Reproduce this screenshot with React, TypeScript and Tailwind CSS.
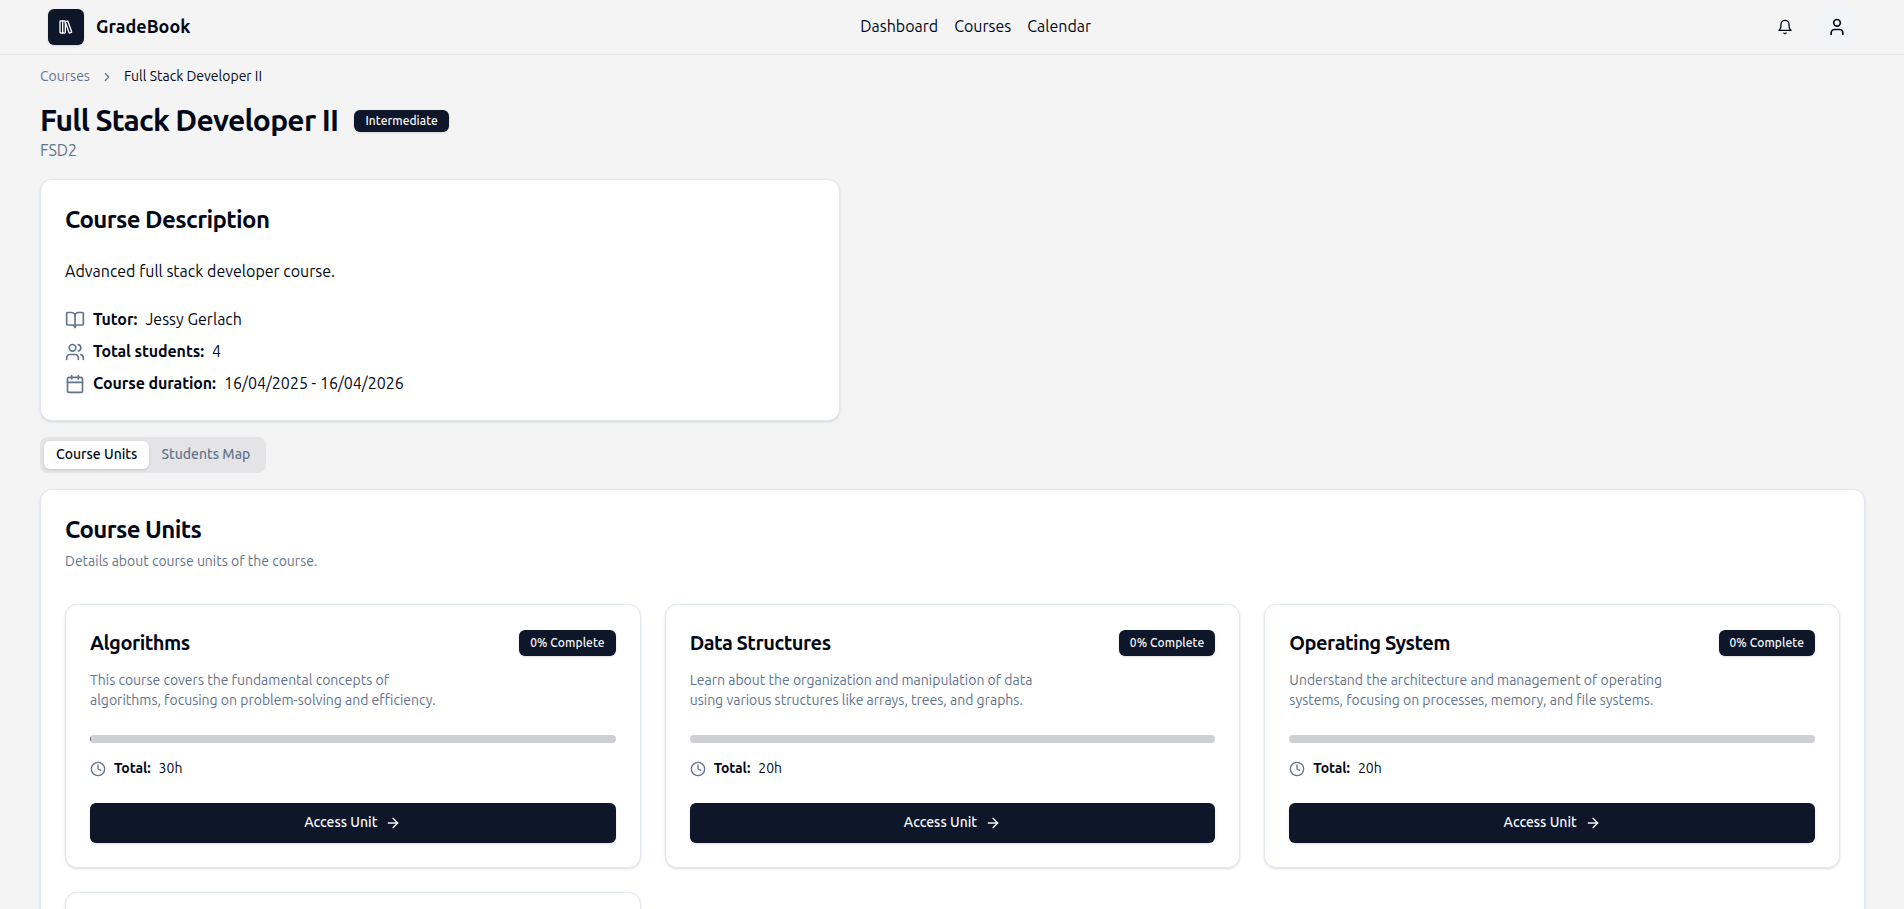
import type { ReactNode } from "react";
import { ArrowRight, BookOpen, Calendar, ChevronRight, Clock, LibraryBig, User, Users } from "lucide-react";

type Unit = {
  name: string;
  lines: string[];
  hours: string;
  started?: boolean;
};

const units: Unit[] = [
  {
    name: "Algorithms",
    lines: ["This course covers the fundamental concepts of", "algorithms, focusing on problem-solving and efficiency."],
    hours: "30h",
    started: true,
  },
  {
    name: "Data Structures",
    lines: ["Learn about the organization and manipulation of data", "using various structures like arrays, trees, and graphs."],
    hours: "20h",
  },
  {
    name: "Operating System",
    lines: ["Understand the architecture and management of operating", "systems, focusing on processes, memory, and file systems."],
    hours: "20h",
  },
];

function Bell() {
  return (
    <svg width="16" height="16" viewBox="0 0 24 24" fill="none" stroke="currentColor" strokeWidth="2" strokeLinecap="round" strokeLinejoin="round">
      <path d="M6 8a6 6 0 0 1 12 0c0 7 3 9 3 9H3s3-2 3-9" />
      <path d="M10.3 21a1.94 1.94 0 0 0 3.4 0" />
    </svg>
  );
}

function Header() {
  return (
    <header className="flex h-[55px] shrink-0 items-center justify-between border-b border-[#e4e4e7] pr-[47px] pl-12">
      <div className="flex items-center gap-3">
        <div className="flex size-9 items-center justify-center rounded-md bg-[#0e1629] text-slate-50 shadow-sm">
          <LibraryBig size={16} />
        </div>
        <span className="-mt-0.5 text-lg leading-7 font-semibold">GradeBook</span>
      </div>
      <nav className="-mt-0.5 flex items-center gap-4">
        <a>Dashboard</a>
        <a>Courses</a>
        <a>Calendar</a>
      </nav>
      <div className="flex w-24 items-center justify-end gap-[14px]">
        <button className="flex size-9 items-center justify-center rounded-md">
          <Bell />
        </button>
        <button className="flex size-10 items-center justify-center rounded-full bg-slate-100">
          <User size={20} />
        </button>
      </div>
    </header>
  );
}

function Detail({ icon, label, value }: { icon: ReactNode; label: string; value: string }) {
  return (
    <div className="flex h-6 items-center gap-2">
      <span className="text-slate-500">{icon}</span>
      <span className="-mt-0.5 font-semibold tracking-[-0.1px]">{label}</span>
      <span className="-mt-0.5">{value}</span>
    </div>
  );
}

function UnitCard({ unit }: { unit: Unit }) {
  return (
    <article className="rounded-xl border border-slate-200 bg-white p-6 shadow-sm">
      <div className="flex h-7 items-center justify-between">
        <h3 className="text-xl leading-7 font-semibold tracking-tight">{unit.name}</h3>
        <span className="rounded-md border border-transparent bg-[#0e1629] px-2.5 py-1 text-xs font-medium tracking-[0.08px] text-slate-50 shadow-sm">
          0% Complete
        </span>
      </div>
      <p className="mt-[13px] text-sm text-slate-500">
        {unit.lines[0]}
        <br />
        {unit.lines[1]}
      </p>
      <div className="mt-[25px] h-2 overflow-hidden rounded-full bg-[#0e1629]/20">
        {unit.started && <div className="h-full w-px bg-[#0e1629]/50" />}
      </div>
      <div className="mt-4 flex h-5 items-center gap-2 text-sm">
        <Clock size={16} className="text-slate-500" />
        <span className="-mt-0.5 font-semibold tracking-[-0.1px]">Total:</span>
        <span className="-mt-0.5">{unit.hours}</span>
      </div>
      <button className="mt-6 flex h-10 w-full items-center justify-center gap-2 rounded-md bg-[#0e1629] text-sm font-medium text-slate-50 shadow-sm">
        <span className="-mt-0.5">Access Unit</span>
        <ArrowRight size={16} />
      </button>
    </article>
  );
}

export default function App() {
  return (
    <div className="flex h-screen flex-col overflow-hidden bg-[#f4f4f4] font-[Ubuntu,'Noto_Sans',sans-serif] text-[#020817]">
      <Header />
      <main className="flex flex-col pt-[11px] pr-[39px] pl-10">
        <div className="flex items-center gap-2.5 text-sm">
          <span className="text-slate-500">Courses</span>
          <ChevronRight size={14} className="mt-0.5 text-slate-500" />
          <span>Full Stack Developer II</span>
        </div>
        <div className="mt-4 flex items-center gap-4">
          <h1 className="text-3xl leading-9 font-semibold tracking-tight">Full Stack Developer II</h1>
          <span className="mt-0.5 rounded-md border border-transparent bg-[#0e1629] px-2.5 py-0.5 text-xs font-medium tracking-[0.06px] text-slate-50 shadow-sm">
            Intermediate
          </span>
        </div>
        <p className="text-slate-500">FSD2</p>

        <section className="mt-[17px] h-[242px] w-[800px] rounded-xl border border-slate-200 bg-white p-6 shadow-sm">
          <h2 className="text-2xl leading-8 font-semibold tracking-tight">Course Description</h2>
          <p className="mt-[23px]">Advanced full stack developer course.</p>
          <div className="mt-[25px] flex flex-col gap-2">
            <Detail icon={<BookOpen size={20} />} label="Tutor:" value="Jessy Gerlach" />
            <Detail icon={<Users size={20} />} label="Total students:" value="4" />
            <Detail icon={<Calendar size={20} />} label="Course duration:" value="16/04/2025 - 16/04/2026" />
          </div>
        </section>

        <div className="mt-4 flex h-9 items-center self-start rounded-lg bg-[#e4e4e6] p-1 text-sm font-medium">
          <button className="h-7 rounded-md bg-white px-3 pb-0.5 shadow-sm">Course Units</button>
          <button className="h-7 rounded-md px-3 pb-0.5 text-slate-500">Students Map</button>
        </div>

        <section className="mt-4 rounded-xl border border-slate-200 bg-white p-6 shadow-sm">
          <h2 className="text-2xl leading-8 font-semibold tracking-tight">Course Units</h2>
          <p className="mt-[5px] text-sm text-slate-500">Details about course units of the course.</p>
          <div className="mt-[33px] grid grid-cols-3 gap-6">
            {units.map((unit) => (
              <UnitCard key={unit.name} unit={unit} />
            ))}
            <article className="h-[264px] rounded-xl border border-slate-200 bg-white shadow-sm" />
          </div>
        </section>
      </main>
    </div>
  );
}
